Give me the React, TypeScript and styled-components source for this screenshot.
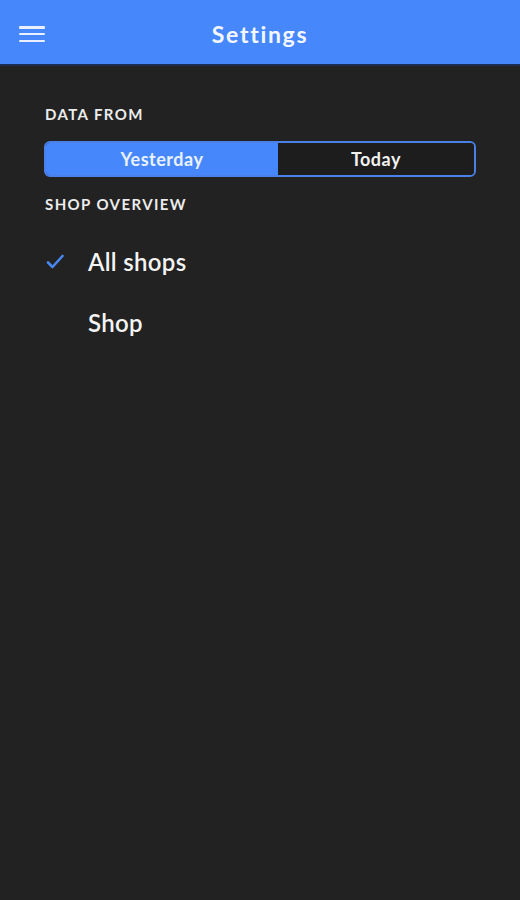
import React, { useState } from "react";
import styled, { createGlobalStyle } from "styled-components";

const Global = createGlobalStyle`
  html, body { margin: 0; padding: 0; background: #222222; }
  body { font-family: "Lato", "Open Sans", sans-serif; }
`;

const Page = styled.div`
  width: 520px;
  min-height: 900px;
  background: #222222;
  color: #f2f2f2;
`;

const Header = styled.header`
  height: 64px;
  background: #4688fc;
  border-bottom: 2px solid #1c2f52;
  display: flex;
  align-items: center;
  justify-content: center;
  position: relative;
`;

const MenuButton = styled.button`
  position: absolute;
  left: 19px;
  top: 26px;
  width: 26px;
  height: 16px;
  padding: 0;
  border: 0;
  background: transparent;
  display: flex;
  flex-direction: column;
  justify-content: space-between;
  cursor: pointer;
`;

const MenuLine = styled.span`
  display: block;
  height: 2.5px;
  background: #e9f0ff;
  border-radius: 1px;
`;

const Title = styled.h1`
  margin: 0;
  font-family: "Lato", sans-serif;
  font-weight: 700;
  font-size: 23px;
  letter-spacing: 1.7px;
  color: #f4f7ff;
  margin-top: 4px;
`;

const Content = styled.main`
  padding: 38px 44px 0 44px;
  display: flex;
  flex-direction: column;
`;

const SectionLabel = styled.div`
  font-family: "Lato", sans-serif;
  font-weight: 700;
  font-size: 15px;
  letter-spacing: 1.4px;
  color: #ececec;
  padding-left: 1px;
  line-height: 20px;
`;

const Segmented = styled.div`
  margin-top: 17px;
  margin-bottom: 17px;
  height: 36px;
  display: flex;
  border-radius: 6px;
  overflow: hidden;
  box-sizing: border-box;
  border: 2px solid #4a80e8;
`;

const Segment = styled.button<{ $active: boolean; $grow: number }>`
  flex: ${(p) => p.$grow} 1 0;
  border: 0;
  margin: 0;
  padding: 0;
  font-family: "Lato", sans-serif;
  font-size: 18px;
  font-weight: 700;
  letter-spacing: 0.5px;
  background: ${(p) => (p.$active ? "#4688fc" : "#1d1d1d")};
  color: ${(p) => (p.$active ? "#eaf1ff" : "#f2f2f2")};
  cursor: pointer;
`;

const List = styled.div`
  display: flex;
  flex-direction: column;
  margin-top: 17px;
`;

const Option = styled.div`
  display: flex;
  align-items: center;
  height: 61px;
  cursor: pointer;
`;

const CheckSlot = styled.div`
  width: 44px;
  display: flex;
  align-items: center;
  padding-left: 2px;
  box-sizing: border-box;
`;

const OptionText = styled.span`
  font-family: "Lato", sans-serif;
  font-size: 24px;
  font-weight: 600;
  color: #f4f4f4;
  letter-spacing: 0.3px;
`;

const Check = () => (
  <svg width="18" height="15" viewBox="0 0 18 15">
    <path
      d="M2 8.5 L6.5 13 L16.5 2"
      fill="none"
      stroke="#4a86f0"
      strokeWidth="2.6"
      strokeLinecap="round"
      strokeLinejoin="round"
    />
  </svg>
);

export default function App() {
  const [day, setDay] = useState<"y" | "t">("y");
  const [shop, setShop] = useState<"all" | "shop">("all");
  return (
    <Page>
      <Global />
      <Header>
        <MenuButton aria-label="menu">
          <MenuLine />
          <MenuLine />
          <MenuLine />
        </MenuButton>
        <Title>Settings</Title>
      </Header>
      <Content>
        <SectionLabel>DATA FROM</SectionLabel>
        <Segmented>
          <Segment $grow={234} $active={day === "y"} onClick={() => setDay("y")}>
            Yesterday
          </Segment>
          <Segment $grow={198} $active={day === "t"} onClick={() => setDay("t")}>
            Today
          </Segment>
        </Segmented>
        <SectionLabel>SHOP OVERVIEW</SectionLabel>
        <List>
          <Option onClick={() => setShop("all")}>
            <CheckSlot>{shop === "all" && <Check />}</CheckSlot>
            <OptionText>All shops</OptionText>
          </Option>
          <Option onClick={() => setShop("shop")}>
            <CheckSlot>{shop === "shop" && <Check />}</CheckSlot>
            <OptionText>Shop</OptionText>
          </Option>
        </List>
      </Content>
    </Page>
  );
}
